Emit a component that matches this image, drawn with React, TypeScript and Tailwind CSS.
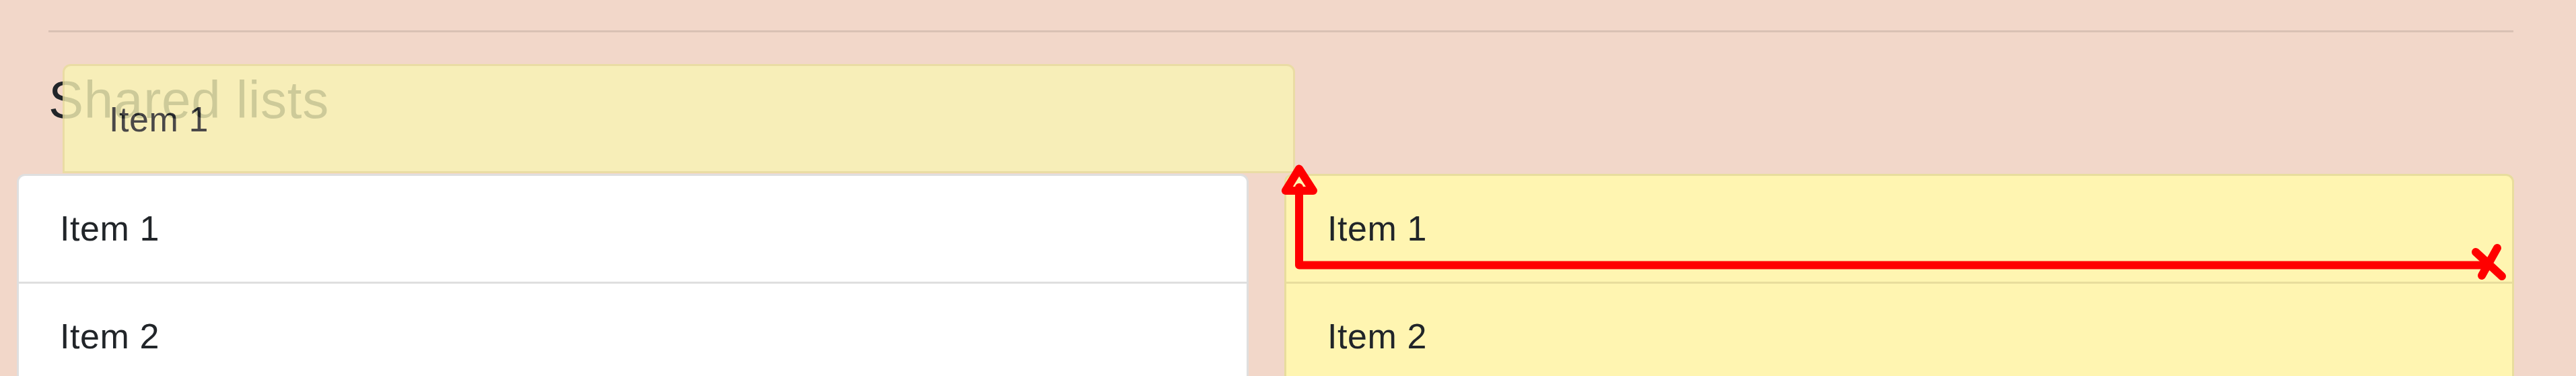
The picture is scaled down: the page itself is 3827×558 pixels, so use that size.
import React from 'react';

const leftItems = ['Item 1', 'Item 2'];
const rightItems = ['Item 1', 'Item 2'];

function ListItem({ label, first, tone }: { label: string; first: boolean; tone: 'white' | 'yellow' }) {
  return (
    <div
      className={`pt-[40px] pb-[40px] pl-[61px] text-[52px] leading-[77px] tracking-[0.6px] text-[#212529] ${
        first ? '' : tone === 'white' ? 'border-t-[3px] border-[#dfdfdf]' : 'border-t-[3px] border-[#e8dd9d]'
      }`}
    >
      {label}
    </div>
  );
}

// Red drag annotation: line from the drop target up to the ghost
function DragArrow() {
  return (
    <svg
      className="absolute inset-0 pointer-events-none"
      width="3827"
      height="558"
      viewBox="0 0 3827 558"
      fill="none"
    >
      <path
        d="M3698 393.5 L1930 393.5 L1930 278"
        stroke="#ff0000"
        strokeWidth="12"
        strokeLinejoin="round"
        strokeLinecap="round"
      />
      <polygon
        points="1930,250.5 1910,283 1951,283"
        stroke="#ff0000"
        strokeWidth="12"
        strokeLinejoin="round"
      />
      <path
        d="M3678 374 L3717 410 M3710 368 L3687 409"
        stroke="#ff0000"
        strokeWidth="12"
        strokeLinecap="round"
      />
    </svg>
  );
}

export default function App() {
  return (
    <div className="relative w-[3827px] h-[558px] overflow-hidden bg-[#f2d7c9] font-['Liberation_Sans',Arial,sans-serif]">
      <div className="ml-[72px] w-[3662px] pt-[45px]">
        <div className="border-t-[3px] border-black/10" />
        <h2 className="mt-[58px] text-[78px] leading-[84px] tracking-[0.8px] font-normal text-[#212529]">Shared lists</h2>

        <div className="mt-[68px] -ml-[47px] flex gap-[53px]">
          <div className="w-[1830px] shrink-0 bg-white border-[3px] border-b-0 border-[#dfdfdf] rounded-t-[12px]">
            {leftItems.map((item, i) => (
              <ListItem key={item} label={item} first={i === 0} tone="white" />
            ))}
          </div>
          <div className="w-[1827px] shrink-0 bg-[#fff5b1] border-[3px] border-b-0 border-[#e8dd9d] rounded-t-[12px]">
            {rightItems.map((item, i) => (
              <ListItem key={item} label={item} first={i === 0} tone="yellow" />
            ))}
          </div>
        </div>
      </div>

      {/* drag ghost of Item 1 */}
      <div className="absolute left-[93px] top-[95px] w-[1831px] h-[162px] opacity-80 bg-[#f9f4b5] border-[3px] border-[#e9de9c] rounded-t-[12px] pl-[66px] pt-[41px] text-[52px] leading-[77px] tracking-[0.6px] text-[#212529]">
        Item 1
      </div>

      <DragArrow />
    </div>
  );
}
